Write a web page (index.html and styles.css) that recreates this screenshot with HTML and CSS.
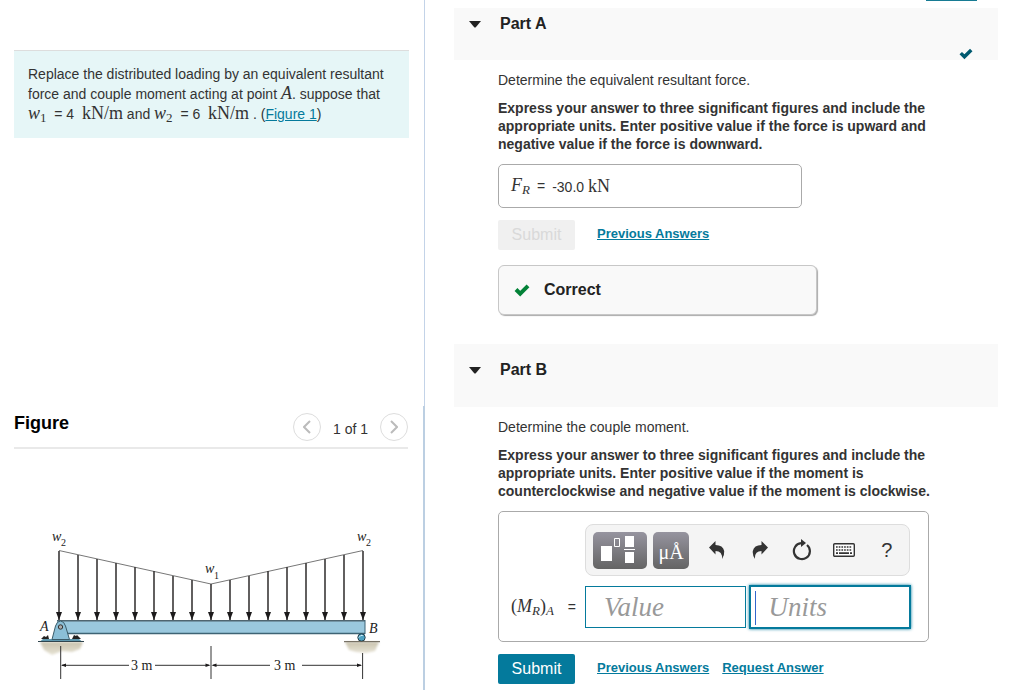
FILE: index.html
```html
<!DOCTYPE html>
<html lang="en">
<head>
<meta charset="utf-8">
<title>Distributed loading</title>
<link rel="stylesheet" href="styles.css">
</head>
<body>
<div class="page">
  <aside class="side">
    <section class="problem">
      <p class="prompt">Replace the distributed loading by an equivalent resultant force and couple moment acting at point <span class="math"><i>A</i></span>. suppose that <span class="math"><i>w</i><sub>1</sub></span>&nbsp; = 4&nbsp; <span class="math">kN/m</span> and <span class="math"><i>w</i><sub>2</sub></span>&nbsp; = 6&nbsp; <span class="math">kN/m</span> . (<a href="#figure">Figure 1</a>)</p>
    </section>
    <section class="figure" id="figure">
      <header class="figure-head">
        <h2>Figure</h2>
        <nav class="pager" aria-label="Figures">
          <button class="round" type="button" aria-label="Previous figure"><svg width="8" height="14" viewBox="0 0 8 14"><path d="M7 1 1 7l6 6"/></svg></button>
          <span>1 of 1</span>
          <button class="round" type="button" aria-label="Next figure"><svg width="8" height="14" viewBox="0 0 8 14"><path d="m1 1 6 6-6 6"/></svg></button>
        </nav>
      </header>
      <svg class="diagram" viewBox="14 525 394 160" role="img" aria-label="Beam with distributed load">
        <defs>
          <marker id="head" markerUnits="userSpaceOnUse" markerWidth="8" markerHeight="7" refX="8" refY="3" viewBox="0 0 8 6" orient="auto"><path d="M0 0 8 3 0 6z" fill="#1c1a1b"/></marker>
          <linearGradient id="ground" x1="0" y1="0" x2="0" y2="1"><stop offset="0" stop-color="#c9c3ae"/><stop offset="1" stop-color="#e8e4d6"/></linearGradient>
          <filter id="soft"><feGaussianBlur stdDeviation="1"/></filter>
        </defs>
        <path d="M40 642h43l-3 7-8 3-10-1-10 4-8-5z" fill="url(#ground)" filter="url(#soft)"/>
        <path d="M345 642h34l-4 9-9 2-10-1-7-2z" fill="url(#ground)" filter="url(#soft)"/>
        <path d="M59 550.500 211 584 363 550.500" fill="none" stroke="#777" stroke-width="1"/>
        <g stroke="#3a3838" stroke-width="1.600">
          <path d="M59 551V620" marker-end="url(#head)"/><path d="M78 555V620" marker-end="url(#head)"/><path d="M97 559V620" marker-end="url(#head)"/><path d="M116 563V620" marker-end="url(#head)"/><path d="M135 567V620" marker-end="url(#head)"/><path d="M154 571V620" marker-end="url(#head)"/><path d="M173 576V620" marker-end="url(#head)"/><path d="M192 580V620" marker-end="url(#head)"/><path d="M211 584V620" marker-end="url(#head)"/><path d="M230 580V620" marker-end="url(#head)"/><path d="M249 576V620" marker-end="url(#head)"/><path d="M268 571V620" marker-end="url(#head)"/><path d="M287 567V620" marker-end="url(#head)"/><path d="M306 563V620" marker-end="url(#head)"/><path d="M325 559V620" marker-end="url(#head)"/><path d="M344 555V620" marker-end="url(#head)"/><path d="M363 551V620" marker-end="url(#head)"/>
        </g>
        <path d="M57 621h308v12.500H57z" fill="#9ac8de"/>
        <path d="M57 620.800h308" stroke="#4f6570" stroke-width="1.500"/>
        <path d="M57 633.600h308" stroke="#3d6374" stroke-width="1.500"/>
        <path d="M365 620v14" stroke="#3d6374"/>
        <path d="M43 639h36l3 2.500H40z" fill="#5d97ae"/>
        <path d="M38 641.500h46" stroke="#30454e"/>
        <path d="M52 639.500 55.500 626q1.500-5 5-5t5 5l4 13.500z" fill="#8bbfd7" stroke="#3b5c6a"/>
        <circle cx="60.500" cy="627" r="2.200" fill="#aaa" stroke="#333"/>
        <path d="M41 639l3-3 2 1 2-2 1 4zM72 639l2-4 2 1 1-1 4 4z" fill="#222"/>
        <circle cx="361.500" cy="637.500" r="3.700" fill="#4da2c2" stroke="#27404c"/>
        <path d="M358.800 637.500q2-3 4-2" fill="none" stroke="#d6eef7"/>
        <path d="M344 641.700h36" stroke="#5b5447"/>
        <g stroke="#333" stroke-width="1" fill="none">
          <path d="M60.700 646v33M211 646v33M362.600 653v26M62 665.300h67M155 665.300h54M213 665.300h57M302 665.300h59"/>
        </g>
        <path d="M61 665.300l5-1.700v3.400zM210.500 665.300l-5-1.700v3.400zM211.500 665.300l5-1.700v3.400zM362 665.300l-5-1.700v3.400z" fill="#1c1a1b"/>
        <g class="label">
          <text x="131" y="670">3 m</text><text x="274" y="670">3 m</text>
          <text class="it" x="52" y="541">w</text><text class="sub" x="61" y="546">2</text>
          <text class="it" x="357" y="541">w</text><text class="sub" x="366" y="546">2</text>
          <text class="it" x="205" y="573">w</text><text class="sub" x="214" y="579">1</text>
          <text class="it" x="40" y="631">A</text><text class="it" x="369" y="633">B</text>
        </g>
      </svg>
    </section>
  </aside>

  <main class="work">
    <div class="top-tab"></div>
    <section class="part">
      <header class="part-head">
        <h2><button class="toggle" type="button"><svg width="12" height="7" viewBox="0 0 12 7"><path d="M0 0h12L7 6q-1 1-2 0z"/></svg>Part A</button></h2>
        <svg class="done" width="14" height="12" viewBox="0 0 16 13" role="img" aria-label="Completed"><path d="M2 5.500 6.200 9.700 14 1.900"/></svg>
      </header>
      <div class="part-body">
        <p>Determine the equivalent resultant force.</p>
        <p class="hint">Express your answer to three significant figures and include the appropriate units. Enter positive value if the force is upward and negative value if the force is downward.</p>
        <div class="answer"><span class="math"><i>F</i><sub><i>R</i></sub></span><span>=</span><span>-30.0 <span class="math">kN</span></span></div>
        <div class="actions">
          <button class="submit" type="button" disabled>Submit</button>
          <a href="#previous-a">Previous Answers</a>
        </div>
        <div class="result"><svg width="16" height="13" viewBox="0 0 16 13"><path d="M2 5.500 6.200 9.700 14 1.900"/></svg>Correct</div>
      </div>
    </section>

    <section class="part">
      <header class="part-head tall">
        <h2><button class="toggle" type="button"><svg width="12" height="7" viewBox="0 0 12 7"><path d="M0 0h12L7 6q-1 1-2 0z"/></svg>Part B</button></h2>
      </header>
      <div class="part-body last">
        <p>Determine the couple moment.</p>
        <p class="hint">Express your answer to three significant figures and include the appropriate units. Enter positive value if the moment is counterclockwise and negative value if the moment is clockwise.</p>
        <div class="entry">
          <div class="toolbar">
            <button class="tool wide" type="button" aria-label="Templates"><svg width="54" height="37" viewBox="0 0 54 37"><path d="M8 14h11v15H8zM32 4h9v11h-9zM32 20h9v11h-9zM31 17h11v1H31z" fill="#fff"/><path d="M21.500 6.500h5v8h-5z" fill="none" stroke="#fff"/></svg></button>
            <button class="tool units" type="button" aria-label="Units">μÅ</button>
            <button class="plain" type="button" aria-label="Undo"><svg width="16" height="18" viewBox="0 0 16 18"><path d="M0 6.500 6.500 0v4q7.500 0 8.700 6 .5 4-2.200 8 .6-8-6.500-8v3.500z"/></svg></button>
            <button class="plain" type="button" aria-label="Redo"><svg width="16" height="18" viewBox="0 0 16 18"><path d="M16 6.500 9.500 0v4Q2 4 .8 10q-.5 4 2.200 8-.6-8 6.500-8v3.500z"/></svg></button>
            <button class="plain" type="button" aria-label="Reset"><svg width="20" height="22" viewBox="0 0 20 22"><path d="M15 6A8 8 0 1 1 9 4.200" fill="none" stroke="#333" stroke-width="2.200"/><path d="M9 0l5 4-5 4z"/></svg></button>
            <button class="plain" type="button" aria-label="Keyboard"><svg width="22" height="14" viewBox="0 0 22 14"><rect x=".7" y=".7" width="20.600" height="12.600" rx="1" fill="#fff" stroke="#333" stroke-width="1.400"/><path d="M3 4h16M3 7h16" stroke="#333" stroke-width="1.700" stroke-dasharray="1.700 1"/><path d="M3 10.200h2M6 10.200h10M17 10.200h2" stroke="#333" stroke-width="1.700"/></svg></button>
            <button class="plain help" type="button" aria-label="Help">?</button>
          </div>
          <label class="name" for="value"><span class="math">(<i>M</i><sub><i>R</i></sub>)<sub><i>A</i></sub></span><span>=</span></label>
          <div class="fields">
            <input id="value" type="text" placeholder="Value">
            <input class="active" type="text" placeholder="Units" aria-label="Units">
          </div>
        </div>
        <div class="actions">
          <button class="submit" type="button">Submit</button>
          <a href="#previous-b">Previous Answers</a>
          <a href="#request">Request Answer</a>
        </div>
      </div>
    </section>
  </main>
</div>
</body>
</html>
```
FILE: styles.css
```css
* { box-sizing: border-box; }
body {
  margin: 0;
  background: #fff;
  color: #333;
  font: 14px/18px "Liberation Sans", Arial, sans-serif;
}
h2, p { margin: 0; }
a { color: #047a9c; }
button { font: inherit; padding: 0; border: 0; background: none; color: inherit; }
.math { font-family: "Liberation Serif", "Times New Roman", serif; font-size: 18px; line-height: 1; }
.math sub { font-size: 13px; line-height: 1; vertical-align: -3px; }

.page {
  display: grid;
  grid-template-columns: minmax(0, 425fr) minmax(0, 599fr);
  min-height: 100vh;
}

.side { display: flex; flex-direction: column; }
.problem {
  min-height: 406px;
  padding: 50px 15px 0 14px;
  border-right: 1px solid #c3d3e8;
}
.prompt {
  padding: 14px;
  border-top: 1px solid #ddd;
  background: #e6f6f7;
  line-height: 19px;
}
.figure {
  flex: 1;
  padding: 0 15px 0 14px;
  border-right: 2px solid #bccfe2;
}
.figure-head {
  display: flex;
  justify-content: space-between;
  height: 43px;
  padding-top: 7px;
  border-bottom: 2px solid #e9e9e9;
}
.figure-head h2 { color: #000; font-size: 18px; line-height: 20px; }
.pager { display: flex; gap: 12px; line-height: 32px; }
.round {
  display: grid;
  place-items: center;
  width: 28px;
  height: 28px;
  border: 1px solid #ddd;
  border-radius: 50%;
}
.round path { fill: none; stroke: #bbb; stroke-width: 2; }
.diagram { display: block; width: 100%; margin-top: 76px; }
.label { font: 14px "Liberation Serif", serif; fill: #222; }
.it { font-style: italic; }
.sub { font-size: 10px; }

.work { padding: 0 26px 0 29px; }
.top-tab { width: 51px; height: 1px; margin: 0 21px 7px auto; background: #177b93; }
.part-head {
  display: flex;
  justify-content: space-between;
  align-items: flex-start;
  min-height: 52px;
  padding: 6px 25px 0 15px;
  background: #f9f9f9;
}
.part-head.tall { min-height: 63px; padding-top: 16px; }
.part-head h2 { font-size: 16px; line-height: 20px; }
.toggle { display: flex; align-items: center; gap: 19px; color: #222; }
.toggle svg { fill: #222; }
.done { align-self: flex-end; }
.done path, .result path { fill: none; stroke: #005a70; stroke-width: 4; }
.part-body { padding: 11px 0 29px 44px; }
.part-body.last { padding-bottom: 0; }
.hint { margin: 10px 0 11px; padding-right: 50px; font-weight: bold; }
.answer {
  display: flex;
  align-items: center;
  gap: 7px;
  width: 304px;
  max-width: 100%;
  height: 44px;
  padding: 0 12px;
  border: 1px solid #aaa;
  border-radius: 5px;
}
.actions { display: flex; gap: 13px; margin-top: 12px; line-height: 28px; font-size: 13px; font-weight: bold; }
.submit {
  width: 77px;
  height: 30px;
  margin-right: 9px;
  border-radius: 2px;
  background: #047a9c;
  color: #fff;
  font-size: 16px;
  font-weight: normal;
}
.submit:disabled { background: #f0f0f0; color: #d9d9d9; }
.result {
  display: flex;
  align-items: center;
  gap: 14px;
  width: 319px;
  max-width: 100%;
  height: 50px;
  margin-top: 15px;
  padding: 0 15px;
  border: 1px solid #c7c7c7;
  border-radius: 6px;
  background: #f9f9f9;
  box-shadow: 1px 1px 1px #aaa;
  color: #222;
  font-size: 16px;
  font-weight: bold;
}
.result path { stroke: #038238; }
.entry {
  display: grid;
  grid-template-columns: 1fr 325px;
  align-items: center;
  gap: 10px 9px;
  width: 431px;
  padding: 12px 18px 13px 12px;
  border: 1px solid #aaa;
  border-radius: 5px;
}
.toolbar {
  grid-column: 2;
  display: flex;
  align-items: center;
  gap: 6px;
  height: 52px;
  padding: 0 4px 0 7px;
  border: 1px solid #ddd;
  border-radius: 8px;
  background: #f4f4f4;
}
.tool {
  width: 36px;
  height: 37px;
  border-radius: 5px;
  background: linear-gradient(#96949f, #646464);
  color: #fff;
  font: 20px/40px "Liberation Serif", serif;
}
.tool.wide { width: 54px; }
.tool.units { margin-right: 4px; }
.tool svg { display: block; }
.plain { display: grid; flex: 1; place-items: center; }
.plain svg { fill: #333; }
.help { font-size: 20px; }
.name { display: flex; justify-content: space-between; align-items: center; }
.fields { display: flex; gap: 4px; }
.fields input {
  flex: 1;
  min-width: 0;
  height: 42px;
  padding: 0 18px;
  border: 1px solid #047a9c;
  border-radius: 0;
  background: #fff;
  font: italic 27px "Liberation Serif", serif;
}
.fields input::placeholder { color: #999; }
.fields .active {
  background: linear-gradient(#36c, #36c) 4px 4px / 1px 34px no-repeat #fff;
  box-shadow: 0 0 0 1px #047a9c, 0 0 3px 1px #047a9c;
}
```
